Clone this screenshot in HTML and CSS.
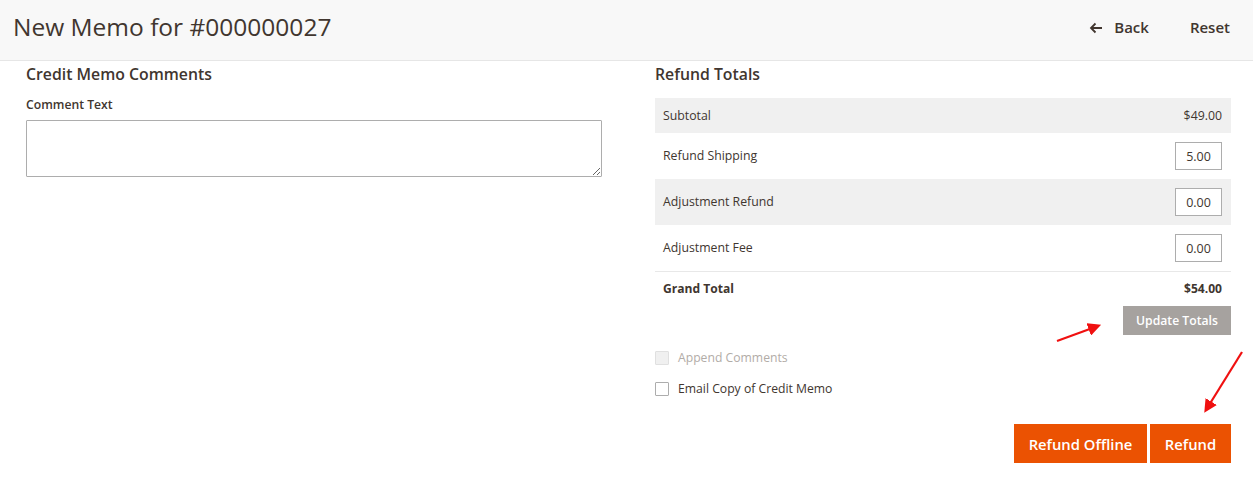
FILE: index.html
```html
<!DOCTYPE html>
<html lang="en">
<head>
<meta charset="utf-8">
<title>New Memo for #000000027</title>
<link rel="stylesheet" href="styles.css">
</head>
<body>
<header class="page-header">
  <h1 class="page-title">New Memo for #000000027</h1>
  <div class="page-actions">
    <a class="action-back" href="#">
      <svg class="back-icon" width="14" height="12" viewBox="0 0 14 12"><path d="M13 6H2M6.5 1.5L2 6l4.5 4.5" fill="none" stroke="#41362f" stroke-width="1.8"/></svg>
      <span>Back</span>
    </a>
    <a class="action-reset" href="#">Reset</a>
  </div>
</header>
<main class="content">
  <section class="col col-left">
    <h2 class="section-title">Credit Memo Comments</h2>
    <label class="field-label" for="comment">Comment Text</label>
    <textarea id="comment" class="comment-text"></textarea>
  </section>
  <section class="col col-right">
    <h2 class="section-title">Refund Totals</h2>
    <div class="totals">
      <div class="row row-shade row-sub"><span>Subtotal</span><span>$49.00</span></div>
      <div class="row row-input"><span>Refund Shipping</span><input class="amount" type="text" value="5.00"></div>
      <div class="row row-input row-shade"><span>Adjustment Refund</span><input class="amount" type="text" value="0.00"></div>
      <div class="row row-input"><span>Adjustment Fee</span><input class="amount" type="text" value="0.00"></div>
      <div class="row row-grand"><span>Grand Total</span><span>$54.00</span></div>
    </div>
    <div class="update-wrap"><button class="btn-update" type="button">Update Totals</button></div>
    <div class="checks">
      <label class="check disabled"><span class="box"></span>Append Comments</label>
      <label class="check"><span class="box"></span>Email Copy of Credit Memo</label>
    </div>
    <div class="submit-wrap">
      <button class="btn-primary btn-offline" type="button">Refund Offline</button>
      <button class="btn-primary btn-refund" type="button">Refund</button>
    </div>
  </section>
</main>
<svg class="annotations" width="1253" height="494" viewBox="0 0 1253 494">
  <defs>
    <marker id="ah" markerWidth="6" markerHeight="6" refX="4.5" refY="3" orient="auto" markerUnits="strokeWidth">
      <path d="M0,0 L6,3 L0,6 Z" fill="#f01010"/>
    </marker>
  </defs>
  <line x1="1057" y1="341" x2="1098" y2="326" stroke="#f01010" stroke-width="2.2" marker-end="url(#ah)"/>
  <line x1="1242" y1="352" x2="1206" y2="410" stroke="#f01010" stroke-width="2.2" marker-end="url(#ah)"/>
</svg>
</body>
</html>
```
FILE: styles.css
```css
* { box-sizing: border-box; }
html, body { margin: 0; padding: 0; }
body {
  font-family: "Open Sans", "Noto Sans", sans-serif;
  color: #41362f;
  background: #fff;
  width: 1253px;
  height: 494px;
  overflow: hidden;
  position: relative;
}
.page-header {
  height: 61px;
  background: #f8f8f8;
  border-bottom: 1px solid #e6e6e6;
  display: flex;
  align-items: center;
  justify-content: space-between;
  padding: 0 23px 6px 13px;
}
.page-title {
  margin: 0;
  font-size: 24.5px;
  font-weight: 400;
  line-height: 32px;
  color: #41362f;
}
.page-actions {
  display: flex;
  align-items: center;
  gap: 41px;
}
.page-actions a {
  color: #41362f;
  text-decoration: none;
  font-size: 15px;
  font-weight: 600;
  display: flex;
  align-items: center;
}
.back-icon { margin-right: 11px; margin-top: 1px; }
.content {
  display: flex;
  gap: 53px;
  padding: 3px 22px 0 26px;
}
.col { flex: 1 1 0; min-width: 0; }
.section-title {
  margin: 0;
  font-size: 15.8px;
  font-weight: 600;
  line-height: 20px;
}
.field-label {
  display: block;
  margin-top: 12px;
  font-size: 12.2px;
  font-weight: 600;
  line-height: 18px;
}
.comment-text {
  display: block;
  margin-top: 6px;
  width: 100%;
  height: 57px;
  border: 1px solid #adadad;
  border-radius: 1px;
  resize: vertical;
  font-family: inherit;
}
.totals { margin-top: 14px; }
.row {
  display: flex;
  align-items: center;
  justify-content: space-between;
  padding: 0 9px 0 8px;
  font-size: 12.3px;
  line-height: 18px;
}
.row-shade { background: #f0f0f0; }
.row-sub { height: 35px; }
.row-input { height: 46px; }
.row-grand {
  height: 35px;
  border-top: 1px solid #e8e8e8;
  font-weight: 700;
  font-size: 12.1px;
}
.amount {
  width: 47px;
  height: 28px;
  border: 1px solid #adadad;
  background: #fff;
  font-family: inherit;
  font-size: 12.5px;
  color: #41362f;
  text-align: center;
  padding: 0;
}
.update-wrap {
  display: flex;
  justify-content: flex-end;
}
.btn-update {
  width: 108px;
  height: 29px;
  border: 0;
  background: #a6a29f;
  color: #fff;
  font-family: inherit;
  font-size: 12.2px;
  font-weight: 600;
  padding: 0;
}
.checks {
  margin-top: 14px;
  display: flex;
  flex-direction: column;
  gap: 13px;
}
.check {
  display: flex;
  align-items: center;
  font-size: 12.2px;
  line-height: 18px;
}
.box {
  width: 14px;
  height: 14px;
  border: 1px solid #adadad;
  border-radius: 1px;
  background: #fff;
  margin-right: 9px;
}
.check.disabled { color: #b2aca7; }
.check.disabled .box { background: #f0f0f0; border-color: #e0e0e0; }
.submit-wrap {
  margin-top: 26px;
  display: flex;
  justify-content: flex-end;
  gap: 3px;
}
.btn-primary {
  height: 39px;
  border: 0;
  background: #eb5202;
  color: #fff;
  font-family: inherit;
  font-size: 14.8px;
  font-weight: 600;
  padding: 0;
}
.btn-offline { width: 133px; }
.btn-refund { width: 81px; }
.annotations {
  position: absolute;
  left: 0;
  top: 0;
  pointer-events: none;
}
```
